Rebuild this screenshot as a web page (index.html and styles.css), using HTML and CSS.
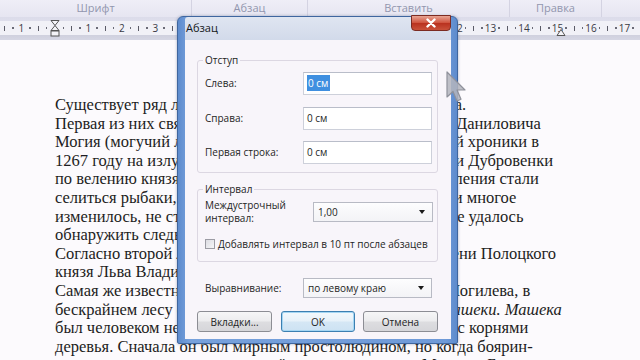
FILE: index.html
```html
<!DOCTYPE html>
<html lang="ru">
<head>
<meta charset="utf-8">
<title>Абзац</title>
<link rel="stylesheet" href="styles.css">
</head>
<body>
<div class="screen">
  <div class="ribbon">
    <div class="rgroup g1">Шрифт</div>
    <div class="rgroup g2">Абзац</div>
    <div class="rgroup g3">Вставить</div>
    <div class="rgroup g4">Правка</div>
    <div class="rgroup g5"></div>
  </div>
  <div class="rulerzone">
    <div class="ruler">
      <div class="cm"><i class="tk"></i><i class="dt"></i><b>1</b><i class="dt"></i></div>
      <div class="cm"><i class="tk"></i><i class="dt"></i><b></b><i class="dt"></i></div>
      <div class="cm"><i class="tk"></i><i class="dt"></i><b>1</b><i class="dt"></i></div>
      <div class="cm"><i class="tk"></i><i class="dt"></i><b>2</b><i class="dt"></i></div>
      <div class="cm"><i class="tk"></i><i class="dt"></i><b>3</b><i class="dt"></i></div>
      <div class="cm"><i class="tk"></i><i class="dt"></i><b>4</b><i class="dt"></i></div>
      <div class="cm"><i class="tk"></i><i class="dt"></i><b>5</b><i class="dt"></i></div>
      <div class="cm"><i class="tk"></i><i class="dt"></i><b>6</b><i class="dt"></i></div>
      <div class="cm"><i class="tk"></i><i class="dt"></i><b>7</b><i class="dt"></i></div>
      <div class="cm"><i class="tk"></i><i class="dt"></i><b>8</b><i class="dt"></i></div>
      <div class="cm"><i class="tk"></i><i class="dt"></i><b>9</b><i class="dt"></i></div>
      <div class="cm"><i class="tk"></i><i class="dt"></i><b>10</b><i class="dt"></i></div>
      <div class="cm"><i class="tk"></i><i class="dt"></i><b>11</b><i class="dt"></i></div>
      <div class="cm"><i class="tk"></i><i class="dt"></i><b>12</b><i class="dt"></i></div>
      <div class="cm"><i class="tk"></i><i class="dt"></i><b>13</b><i class="dt"></i></div>
      <div class="cm"><i class="tk"></i><i class="dt"></i><b>14</b><i class="dt"></i></div>
      <div class="cm"><i class="tk"></i><i class="dt"></i><b>15</b><i class="dt"></i></div>
      <div class="cm"><i class="tk"></i><i class="dt"></i><b>16</b><i class="dt"></i></div>
      <div class="cm"><i class="tk"></i><i class="dt"></i><b>17</b><i class="dt"></i></div>
    </div>
    <svg class="hourglass" width="10" height="17" viewBox="0 0 10 17">
      <path d="M1 0.5 H9 L5 5.5 Z" fill="#f4f4f8" stroke="#555" stroke-width="1"/>
      <path d="M5 5.5 L9 10.5 H1 Z" fill="#f4f4f8" stroke="#555" stroke-width="1"/>
      <rect x="1" y="11" width="8" height="5" fill="#f4f4f8" stroke="#555" stroke-width="1"/>
    </svg>
    <svg class="rindent" width="10" height="8" viewBox="0 0 10 8">
      <path d="M5 0.5 L9 6.5 H1 Z" fill="#f4f4f8" stroke="#555" stroke-width="1"/>
    </svg>
  </div>
  <div class="doc">
    <p class="ln">Существует ряд легенд о происхождении названия города.</p>
    <p class="ln">Первая из них связывает название города с именем Льва Даниловича</p>
    <p class="ln">Могия (могучий лев), согласно данным одной летописной хроники в</p>
    <p class="ln">1267 году на излучине Днепра, при впадении в него речки Дубровенки</p>
    <p class="ln">по велению князя был построен замок. Вокруг его укрепления стали</p>
    <p class="ln">селиться рыбаки, ремесленники. С тех пор прошли века и многое</p>
    <p class="ln">изменилось, не стало самого замка, и, до сих пор, так и не удалось</p>
    <p class="ln">обнаружить следы древнего замка.</p>
    <p class="ln">Согласно второй легенде, город получил название по имени Полоцкого</p>
    <p class="ln">князя Льва Владимировича.</p>
    <p class="ln">Самая же известная легенда говорит, что некогда возле Могилева, в</p>
    <p class="ln">бескрайнем лесу обитала шайка разбойника по имени <em>Машеки. Машека</em></p>
    <p class="ln">был человеком необычайной силы и мог легко вырывать с корнями</p>
    <p class="ln">деревья. Сначала он был мирным простолюдином, но когда боярин-</p>
    <p class="ln">пан отнял у него невесту, он ушёл в лес, и с тех пор Машека. Был</p>
  </div>

  <div class="dialog">
    <div class="titlebar">
      <span class="title">Абзац</span>
      <span class="close">
        <svg width="12" height="10" viewBox="0 0 12 10"><path d="M2.5 1.5 L9.5 8.5 M9.5 1.5 L2.5 8.5" stroke="#fff" stroke-width="2.4" stroke-linecap="round"/></svg>
      </span>
    </div>
    <div class="client">
      <fieldset class="group g-indent">
        <legend>Отступ</legend>
        <div class="rows">
          <span class="lbl">Слева:</span>
          <span class="field"><span class="sel">0 см</span></span>
          <span class="lbl">Справа:</span>
          <span class="field">0 см</span>
          <span class="lbl">Первая строка:</span>
          <span class="field">0 см</span>
        </div>
      </fieldset>
      <fieldset class="group g-spacing">
        <legend>Интервал</legend>
        <div class="linerow">
          <span class="lbl two">Междустрочный<br>интервал:</span>
          <span class="combo c-spacing">1,00<i class="arrow"></i></span>
        </div>
        <div class="checkrow">
          <span class="check"></span>
          <span>Добавлять интервал в 10 пт после абзацев</span>
        </div>
      </fieldset>
      <div class="alignrow">
        <span class="lbl">Выравнивание:</span>
        <span class="combo c-align">по левому краю<i class="arrow"></i></span>
      </div>
      <div class="buttons">
        <span class="btn b-tabs">Вкладки...</span>
        <span class="btn b-ok">OK</span>
        <span class="btn b-cancel">Отмена</span>
      </div>
    </div>
  </div>

  <svg class="cursor" width="22" height="34" viewBox="0 0 22 34">
    <path d="M2 2 L2 27 L8 21.5 L12 31 L16 29.2 L12 20 L20 20 Z" fill="#b4b5bd" fill-opacity="0.85" stroke="#8f919b" stroke-width="1.2" stroke-linejoin="round"/>
  </svg>
</div>
</body>
</html>
```

FILE: styles.css
```css
html, body {
  margin: 0;
  padding: 0;
}
body {
  background: #fcfafd;
}
.screen {
  position: relative;
  width: 640px;
  height: 360px;
  overflow: hidden;
  background: #fcfafd;
  font-family: "Open Sans", "Noto Sans", sans-serif;
}

/* ribbon group captions */
.ribbon {
  display: flex;
  height: 17px;
  background: linear-gradient(#efeef7, #e6e5f1);
}
.rgroup {
  box-sizing: border-box;
  height: 17px;
  line-height: 16px;
  text-align: center;
  font-size: 11px;
  color: #9296ae;
  border-right: 1px solid #d4d3e2;
}
.g1 { width: 192px; }
.g2 { width: 116px; }
.g3 { width: 202px; }
.g4 { width: 92px; }
.g5 { flex: 1; border-right: 0; }

/* ruler */
.rulerzone {
  position: relative;
  height: 23px;
  box-sizing: border-box;
  padding-top: 4px;
  background: linear-gradient(#dcdcea 0, #e4e4ef 18px, #cfd0de 18px, #d6d7e4 23px);
}
.ruler {
  display: flex;
  height: 14px;
  padding-left: 0.5px;
  background: #f1f1f7;
}
.cm {
  display: flex;
  align-items: center;
  flex: none;
  width: 33.5px;
}
.cm > * {
  flex: none;
  width: 8.375px;
  display: flex;
  justify-content: center;
  align-items: center;
}
.cm b {
  font-weight: normal;
  font-size: 10px;
  color: #3a3a44;
  line-height: 14px;
}
.tk::before {
  content: "";
  width: 1px;
  height: 5px;
  background: #5a5a66;
}
.dt::before {
  content: "";
  width: 1.5px;
  height: 1.5px;
  background: #6a6a76;
}
.hourglass {
  position: absolute;
  left: 50px;
  top: 3px;
}
.rindent {
  position: absolute;
  left: 556px;
  top: 12px;
}

/* document */
.doc {
  padding-top: 56px;
  font-family: "Liberation Serif", "Times New Roman", serif;
  font-size: 16.5px;
  line-height: 18.6px;
  color: #1d1d22;
}
.ln {
  margin: 0;
  padding-left: 55px;
  white-space: nowrap;
}

/* dialog */
.dialog {
  position: absolute;
  left: 177px;
  top: 16px;
  width: 281px;
  height: 328px;
  box-sizing: border-box;
  border: 1px solid #3f669f;
  border-radius: 6px 6px 2px 2px;
  padding: 0 6px 4px 7px;
  display: flex;
  flex-direction: column;
  background: linear-gradient(90deg, #5d8bcd, #77a1dc 4%, #6f9ad8 96%, #5d8bcd);
  box-shadow: 0 0 3px rgba(60, 80, 120, 0.45);
}
.titlebar {
  display: flex;
  align-items: flex-start;
  height: 23px;
  background: linear-gradient(#dfe5f1, #d2daea);
  border-radius: 3px 3px 0 0;
}
.title {
  flex: 1;
  font-size: 11px;
  line-height: 21px;
  padding-left: 1px;
  color: #141820;
}
.close {
  display: flex;
  justify-content: center;
  align-items: center;
  width: 40px;
  height: 16px;
  margin-top: -2px;
  box-sizing: border-box;
  border: 1px solid #7c2b22;
  border-radius: 0 0 4px 4px;
  background: linear-gradient(#e8a594, #d0543f 48%, #b9321f 52%, #c9513a);
}
.client {
  flex: 1;
  background: #f8f5fa;
  padding-top: 13px;
  font-size: 10px;
  color: #1e1f24;
  display: flex;
  flex-direction: column;
}
.group {
  margin: 0 13px 0 12px;
  padding: 0 6px 8px 7px;
  border: 1px solid #dcd7e2;
  border-radius: 3px;
  min-width: 0;
}
.group legend {
  padding: 0 2px;
  margin-left: -2px;
  line-height: 14px;
  font-size: 10px;
}
.rows {
  margin-top: 5px;
  display: grid;
  grid-template-columns: 98px 129px;
  row-gap: 11.5px;
  align-items: center;
}
.lbl {
  line-height: 13px;
}
.field {
  box-sizing: border-box;
  height: 23px;
  padding: 4px 3px;
  line-height: 13px;
  background: #fff;
  border: 1px solid #cdd0da;
  border-top-color: #b9bdc9;
}
.sel {
  background: #3f8fe0;
  color: #fff;
  padding: 1px 2px 1px 1px;
}
.g-spacing {
  margin-top: 9px;
  padding-bottom: 10px;
}
.linerow {
  margin-top: 3px;
  display: grid;
  grid-template-columns: 108px 120px;
  align-items: center;
}
.combo {
  box-sizing: border-box;
  height: 20px;
  line-height: 18px;
  padding-left: 4px;
  background: linear-gradient(#fdfdfe, #f3f3f6);
  border: 1px solid #b8bac4;
  display: flex;
  align-items: center;
  justify-content: space-between;
}
.arrow {
  width: 0;
  height: 0;
  margin-right: 7px;
  border-left: 3.5px solid transparent;
  border-right: 3.5px solid transparent;
  border-top: 4px solid #1a1a1a;
}
.checkrow {
  margin-top: 12px;
  height: 14px;
  display: flex;
  align-items: center;
}
.check {
  width: 10px;
  height: 10px;
  margin-right: 3px;
  box-sizing: border-box;
  border: 1px solid #9c9ca4;
  background: linear-gradient(135deg, #dcdce2, #f6f6f8);
}
.alignrow {
  margin-top: 16px;
  padding-left: 20px;
  display: grid;
  grid-template-columns: 98px 129px;
  align-items: center;
}
.buttons {
  margin-top: 13px;
  padding-left: 12px;
  display: flex;
}
.btn {
  box-sizing: border-box;
  height: 21px;
  display: flex;
  align-items: center;
  justify-content: center;
  border: 1px solid #8c8d94;
  border-radius: 3px;
  background: linear-gradient(#f6f6f7 0, #ececee 48%, #dddde0 52%, #d6d6da);
  font-size: 10px;
}
.b-tabs { width: 75px; }
.b-ok {
  width: 74px;
  margin-left: 9px;
  border-color: #3c7fb1;
  box-shadow: inset 0 0 0 1px #a5d6f3;
  background: linear-gradient(#f3f8fc 0, #e7f1f9 48%, #d5e7f5 52%, #cde2f3);
}
.b-cancel {
  width: 75px;
  margin-left: 8px;
}

.cursor {
  position: absolute;
  left: 445px;
  top: 70px;
}
```
